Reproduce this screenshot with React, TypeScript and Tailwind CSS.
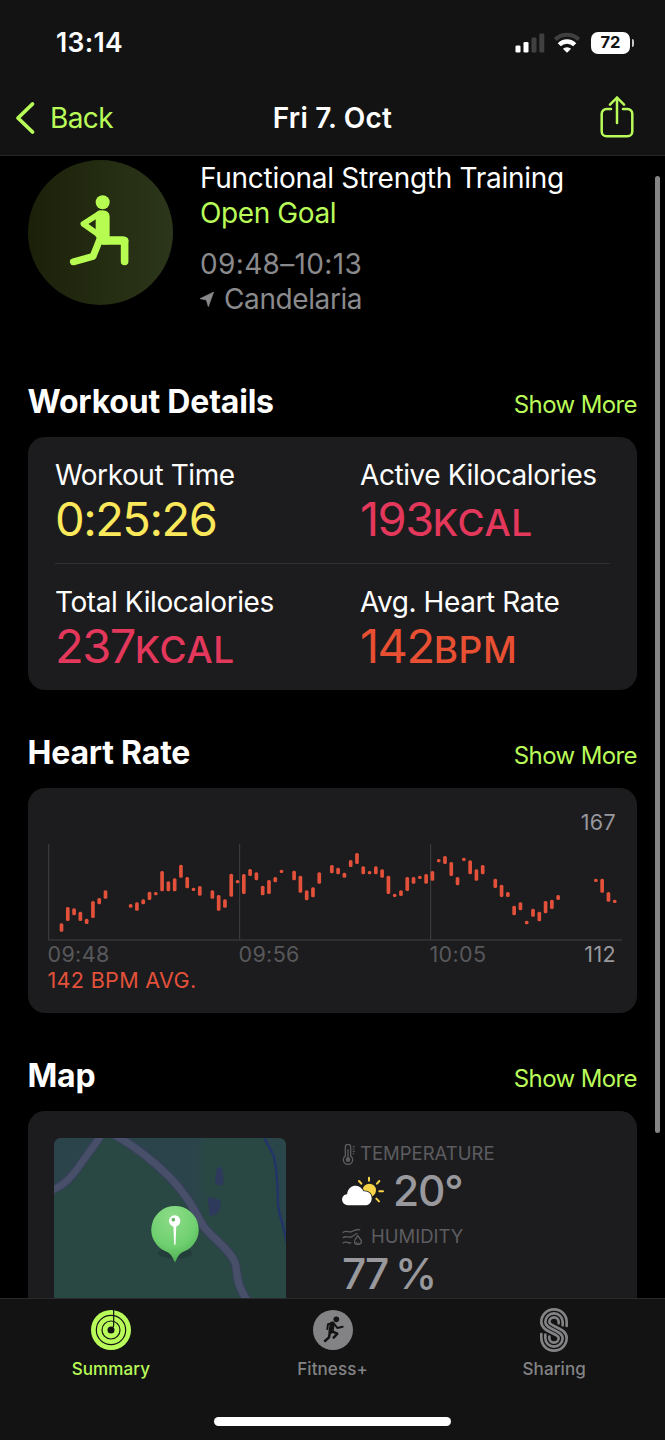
import type { ReactNode } from "react";

// [slot, top, bottom] of every heart rate sample
const samples: [number, number, number][] = [
  [0, 280, 305], [1, 231, 273], [2, 235, 256], [3, 245, 273], [4, 266, 282],
  [5, 213, 264], [6, 204, 223], [7, 181, 206], [11, 222, 233], [12, 217, 242],
  [13, 208, 223], [14, 185, 210], [15, 186, 196], [16, 123, 184], [17, 154, 184],
  [18, 145, 184], [19, 104, 143], [20, 141, 175], [21, 173, 183], [22, 168, 197],
  [24, 181, 206], [25, 195, 242], [26, 208, 233], [27, 131, 200], [28, 150, 160],
  [29, 132, 192], [30, 117, 138], [31, 127, 151], [32, 167, 196], [33, 150, 192],
  [34, 141, 157], [35, 119, 129], [37, 122, 151], [38, 137, 188], [39, 181, 211],
  [40, 172, 202], [41, 127, 161], [43, 105, 130], [44, 113, 133], [45, 128, 143],
  [46, 90, 111], [47, 69, 102], [48, 109, 133], [49, 123, 133], [50, 109, 133],
  [51, 118, 143], [52, 137, 192], [53, 191, 201], [54, 181, 198], [55, 141, 183],
  [56, 141, 161], [57, 137, 147], [58, 132, 161], [59, 123, 152], [60, 87, 97],
  [61, 78, 102], [62, 96, 138], [63, 141, 166], [64, 83, 93], [65, 91, 133],
  [66, 118, 152], [67, 105, 133], [69, 146, 174], [70, 164, 201], [71, 186, 201],
  [72, 227, 256], [73, 217, 241], [74, 272, 283], [75, 236, 260], [76, 245, 274],
  [77, 213, 250], [78, 209, 237], [79, 195, 210], [85, 146, 156], [86, 146, 188],
  [87, 186, 215], [88, 209, 219],
];

const details = [
  { label: "Workout Time", value: "0:25:26", unit: "", color: "text-[#fbe95b]" },
  { label: "Active Kilocalories", value: "193", unit: "KCAL", color: "text-[#e3385c]" },
  { label: "Total Kilocalories", value: "237", unit: "KCAL", color: "text-[#e3385c]" },
  { label: "Avg. Heart Rate", value: "142", unit: "BPM", color: "text-[#e84f33]" },
];

function SectionHeader({ title }: { title: string }) {
  return (
    <div className="flex h-[40px] items-baseline justify-between leading-[40px]">
      <h2 className="text-[32px] font-bold tracking-[-0.2px] text-white">{title}</h2>
      <span className="text-[24px] tracking-[-0.6px] text-[#b9fb58]">Show More</span>
    </div>
  );
}

function StatusBar() {
  return (
    <div className="flex h-[81px] items-center pt-1 pr-[31px] pl-[56px]">
      <span className="text-[26.5px] font-semibold tracking-[0.3px] text-white">13:14</span>
      <div className="ml-auto flex items-center">
        <svg width="30" height="20" viewBox="0 0 30 20" className="mr-2">
          <rect x="0.5" y="12.5" width="5" height="7" rx="1.3" fill="#fff" />
          <rect x="8.5" y="9" width="5" height="10.5" rx="1.3" fill="#fff" />
          <rect x="16.5" y="4.5" width="5" height="15" rx="1.3" fill="#404040" />
          <rect x="24.3" y="0.5" width="5" height="19" rx="1.3" fill="#404040" />
        </svg>
        <svg width="28" height="21" viewBox="0 0 28 21" className="mr-[10px]" fill="none">
          <path d="M2.3 7.5a16.8 16.8 0 0 1 23.4 0" stroke="#404040" strokeWidth="4.2" />
          <path d="M6.3 12.8a10.8 10.8 0 0 1 15.4 0" stroke="#fff" strokeWidth="4.4" />
          <path d="M9.9 16.8a6 6 0 0 1 8.2 0L14 20.8z" fill="#fff" />
        </svg>
        <div className="flex h-[22px] w-[39px] items-center justify-center rounded-[7px] bg-white text-[16.5px] font-bold text-[#131313]">
          72
        </div>
        <div className="ml-[1.5px] h-2 w-[2.5px] rounded-r-full bg-[#c8c8c8]" />
      </div>
    </div>
  );
}

function NavBar() {
  return (
    <div className="grid h-[74px] grid-cols-[1fr_auto_1fr] items-center px-[15px]">
      <div className="flex items-center text-[#b9fb58]">
        <svg width="21" height="34" viewBox="0 0 21 34" fill="none" stroke="currentColor" strokeWidth="3.8" strokeLinecap="round" strokeLinejoin="round">
          <path d="M17.5 3 3 17l14.500 14" />
        </svg>
        <span className="ml-[14px] text-[28px] tracking-[-0.6px]">Back</span>
      </div>
      <h1 className="text-[28px] font-semibold tracking-[0.2px] text-white">Fri 7. Oct</h1>
      <svg width="34" height="42" viewBox="0 0 34 42" className="mr-4 mb-[2px] justify-self-end text-[#b9fb58]" fill="none" stroke="currentColor" strokeWidth="2.5" strokeLinecap="round" strokeLinejoin="round">
        <path d="M11 13H6.5A4.8 4.8 0 0 0 1.7 17.8v17.7a4.8 4.8 0 0 0 4.8 4.8h21a4.8 4.8 0 0 0 4.8-4.8V17.8A4.8 4.8 0 0 0 27.5 13H23" />
        <path d="M17 27V1.5M10 8.7l7-7.2 7 7.2" />
      </svg>
    </div>
  );
}

function WorkoutIcon() {
  return (
    <div className="h-[145px] w-[145px] shrink-0 rounded-full bg-gradient-to-r from-[#1b2109] to-[#2c361a]">
      <svg width="145" height="145" viewBox="80.5 29 436 436" fill="none" stroke="#b6fc51" strokeLinecap="round" strokeLinejoin="round">
        <circle cx="305" cy="156" r="21" fill="#b6fc51" stroke="none" />
        <path d="M284 190q5-10 20-10 22 0 22 20v58h37q20 0 20 17l-78 9-21-24z" fill="#b6fc51" stroke="none" />
        <path d="M295 190 247 221 293 254" strokeWidth="17" />
        <path d="M298 264 276 319 217 335" strokeWidth="21" />
        <path d="M306 272H371V334" strokeWidth="23" />
      </svg>
    </div>
  );
}

function HeartChart() {
  return (
    <svg width="574" height="97" viewBox="51 42 1722 291" className="block">
      <g stroke="#414143" strokeWidth="3">
        <path d="M53 42V329M626 42V329M1199 42V329M52 330H1773" />
      </g>
      {samples.map(([slot, top, bottom]) => (
        <rect
          key={slot}
          x={86 + slot * 18.86}
          y={top}
          width="11"
          height={bottom - top}
          rx="4.5"
          fill="#e4513a"
        />
      ))}
    </svg>
  );
}

function MapPreview() {
  return (
    <svg width="232" height="160" viewBox="74 86 696 480" className="block rounded-t-[7px]">
      <defs>
        <linearGradient id="field" x1="0" y1="0" x2="1" y2="0">
          <stop offset="0" stopColor="#2b444c" />
          <stop offset="0.85" stopColor="#2b444c" />
          <stop offset="1" stopColor="#294744" />
        </linearGradient>
        <radialGradient id="pin" cx="0.45" cy="0.2" r="0.85">
          <stop offset="0" stopColor="#8edc88" />
          <stop offset="0.6" stopColor="#6fd070" />
          <stop offset="1" stopColor="#4aa84e" />
        </radialGradient>
      </defs>
      <rect x="74" y="86" width="696" height="480" fill="#294743" />
      <path d="M74 86H210L140 180 74 238z" fill="#2b444c" />
      <path d="M265 86H532V240L515 335 440 230z" fill="url(#field)" />
      <path d="M704 86 735 145 745 290 770 385V86z" fill="#2b464a" />
      <g fill="none">
        <path d="M64 244C100 232 130 200 150 170S195 110 215 78" stroke="#39405c" strokeWidth="26" />
        <path d="M64 244C100 232 130 200 150 170S195 110 215 78" stroke="#485069" strokeWidth="20" />
        <path d="M255 76C310 108 370 150 425 208S495 305 525 355C560 395 600 420 615 455S610 505 655 576" stroke="#39405c" strokeWidth="27" />
        <path d="M255 76C310 108 370 150 425 208S495 305 525 355C560 395 600 420 615 455S610 505 655 576" stroke="#485069" strokeWidth="21" />
        <path d="M704 82C712 105 730 125 735 148 742 180 745 220 746 285 748 320 765 350 772 400" stroke="#22346a" strokeWidth="7" />
      </g>
      <path d="M563 176 574 172 580 183 583 220 575 230 560 225 557 210zM534 262 560 268 575 272 572 300 560 316 540 320 538 290z" fill="#2e3a5c" />
      <ellipse cx="438" cy="432" rx="52" ry="16" fill="#1d3532" opacity="0.5" />
      <path d="M437 290a71 71 0 0 1 25 137.5c-13 6-17 16-25 32-8-16-12-26-25-32A71 71 0 0 1 437 290z" fill="url(#pin)" />
      <path d="M432 346h9l-2.5 60h-4z" fill="#fff" />
      <circle cx="436" cy="335" r="17" fill="#fff" />
      <circle cx="432" cy="331" r="5.5" fill="#6ab56b" />
    </svg>
  );
}

function WeatherIcon() {
  return (
    <svg width="42" height="30" viewBox="66 198 126 90">
      <circle cx="148" cy="241" r="20" fill="#f8d548" />
      <path d="M147 203v9M117 213l7 8M178 213l-7 8M178 244h11M169 266l8 8" stroke="#f8d548" strokeWidth="6" strokeLinecap="round" />
      <path
        d="M84 286C60 284 62 254 81 253 84 232 98 226 108 227 119 228 126 235 131 244 147 243 156 253 155 267 154 279 145 286 135 286z"
        fill="#fff"
        stroke="#1c1c1e"
        strokeWidth="5"
        paintOrder="stroke"
      />
    </svg>
  );
}

function ThermometerIcon() {
  return (
    <svg width="14" height="21" viewBox="66 100 42 63" fill="none" stroke="#5c5c60" strokeWidth="4" strokeLinecap="round">
      <path d="M76 136V109a8 8 0 0 1 16 0v27a14 14 0 1 1-16 0z" />
      <path d="M84 117v25" />
      <circle cx="84" cy="147" r="5" fill="#5c5c60" />
      <path d="M99 108h5M99 115h3M99 122h5M99 129h3" strokeWidth="3" />
    </svg>
  );
}

function HumidityIcon() {
  return (
    <svg width="21" height="18" viewBox="68 353 64 54" fill="none" stroke="#5c5c60" strokeWidth="4" strokeLinecap="round" strokeLinejoin="round">
      <path d="M71 366c10-8 18 2 28-3s16-8 23-5M71 382c10-8 17 3 27-3s9-8 16-9M71 398c9-7 14 2 24 0" />
      <path d="M116 376c6 9 13 15 11 20-3 9-19 9-21 0-1-6 5-11 10-20z" />
      <path d="M112 397q3 4 7 2" strokeWidth="3" />
    </svg>
  );
}

function RingsIcon() {
  return (
    <svg width="40" height="40" viewBox="152 46 120 120">
      <circle cx="212" cy="106" r="60" fill="#b9fb58" />
      <g fill="none" stroke="#131313" strokeWidth="3.6">
        <circle cx="212" cy="106" r="44" />
        <circle cx="212" cy="106" r="27" />
        <path d="M220 44V92q0 6-6 10" />
      </g>
      <circle cx="212" cy="106" r="10.5" fill="#131313" />
    </svg>
  );
}

function RunnerIcon() {
  return (
    <svg width="40" height="40" viewBox="816 46 120 120" fill="none" stroke="#131313" strokeLinecap="round" strokeLinejoin="round">
      <circle cx="876" cy="106" r="60" fill="#838385" stroke="none" />
      <circle cx="886" cy="74" r="8.5" fill="#131313" stroke="none" />
      <path d="M874 88 870 110" strokeWidth="15" />
      <path d="M874 86 861 89 859 103M880 88 889 100 905 96" strokeWidth="6" />
      <path d="M873 110 889 117 878 129M867 112 864 128 852 139" strokeWidth="7.5" />
    </svg>
  );
}

function SharingIcon() {
  return (
    <svg width="28" height="44" viewBox="180 40 84 132" fill="none" stroke="#838385" strokeWidth="8" strokeLinecap="round">
      <path d="M260 94V82A38 38 0 0 0 184 82C184 113 236 116 236 130A14 14 0 0 1 208 130V126" />
      <path d="M248 92V82A26 26 0 0 0 196 82C196 106 248 106 248 130A26 26 0 0 1 196 130V120" />
      <path d="M236 86V82A14 14 0 0 0 208 82C208 96 260 99 260 130A38 38 0 0 1 184 130V118" />
    </svg>
  );
}

function Tab({ icon, label, className }: { icon: ReactNode; label: string; className: string }) {
  return (
    <div className="flex flex-1 flex-col items-center">
      <div className="flex h-[44px] items-center">{icon}</div>
      <span className={`mt-[5px] text-[17px] leading-[24px] font-medium tracking-[0.1px] ${className}`}>{label}</span>
    </div>
  );
}

export default function App() {
  return (
    <div className="relative flex h-[1440px] w-[665px] flex-col overflow-hidden bg-black font-['Inter',sans-serif]">
      <header className="h-[156px] shrink-0 border-b border-[#262627] bg-[#131313]">
        <StatusBar />
        <NavBar />
      </header>

      <main className="min-h-0 flex-1 overflow-hidden pt-[4px] pr-[28px] pl-[27.5px]">
        {/* Summary */}
        <div className="flex h-[222px]">
          <WorkoutIcon />
          <div className="ml-[27.5px] pt-px text-[28px] leading-[35px] whitespace-nowrap">
            <p className="tracking-[-0.28px] text-white">Functional Strength Training</p>
            <p className="tracking-[-0.4px] text-[#b9fb58]">Open Goal</p>
            <p className="mt-4 tracking-[0.35px] text-[#8a8a8d]">09:48–10:13</p>
            <p className="flex items-center tracking-[-0.4px] text-[#8a8a8d]">
              <svg width="14" height="15" viewBox="602 428 42 45" className="mr-[10px]" fill="currentColor">
                <path d="M643 428 602 448 621 452 627 472z" stroke="currentColor" strokeWidth="2" />
              </svg>
              Candelaria
            </p>
          </div>
        </div>

        {/* Workout details */}
        <SectionHeader title="Workout Details" />
        <div className="mt-[15px] h-[253px] rounded-[17px] bg-[#1c1c1e] px-[27.5px] pt-[20px]">
          <div className="grid grid-cols-[305px_1fr]">
            {details.map((item, i) => (
              <div
                key={item.label}
                className={`whitespace-nowrap ${i < 2 ? "h-[107px] border-b border-[#303033]" : "pt-[20px]"}`}
              >
                <p className="text-[28px] leading-[36px] tracking-[-0.42px] text-white">{item.label}</p>
                <p className={`text-[47px] leading-[52px] tracking-[-1.5px] ${item.color}`}>
                  {item.value}
                  <span className="text-[37px] font-medium tracking-[0.6px]">{item.unit}</span>
                </p>
              </div>
            ))}
          </div>
        </div>

        {/* Heart rate */}
        <div className="h-[43px]" />
        <SectionHeader title="Heart Rate" />
        <div className="mt-[15px] h-[225px] rounded-[17px] bg-[#1c1c1e] pr-[16px] pl-[20px] text-[21.5px] tracking-[0.35px]">
          <div className="pt-[21px] pr-[5px] text-right leading-[27px] text-[#98989d]">167</div>
          <div className="h-[8px]" />
          <HeartChart />
          <div className="grid grid-cols-[191px_191px_1fr] leading-[26px] text-[#58585b]">
            <span>09:48</span>
            <span>09:56</span>
            <span className="flex justify-between pr-[5px]">
              10:05<span className="text-[#98989d]">112</span>
            </span>
          </div>
          <div className="leading-[27px] text-[#e4513a]">142 BPM AVG.</div>
        </div>

        {/* Map */}
        <div className="h-[43px]" />
        <SectionHeader title="Map" />
        <div className="mt-[15px] flex h-[260px] rounded-[17px] bg-[#1c1c1e] pt-[27px] pl-[26.5px]">
          <MapPreview />
          <div className="ml-[56px] pt-[2px] text-[#98989d]">
            <div className="flex h-[28px] items-center gap-[4px] text-[18.5px] text-[#5c5c60]">
              <ThermometerIcon />
              TEMPERATURE
            </div>
            <div className="flex h-[46px] items-center gap-[9px] text-[42.5px] leading-[46px] font-medium tracking-[-1.2px]">
              <WeatherIcon />
              20°
            </div>
            <div className="mt-[9px] flex h-[28px] items-center gap-[8px] text-[18.5px] text-[#5c5c60]">
              <HumidityIcon />
              HUMIDITY
            </div>
            <div className="text-[42.5px] leading-[45px] font-medium tracking-[-2.2px] [word-spacing:-1px]">77 %</div>
          </div>
        </div>
      </main>

      {/* Scroll indicator */}
      <div className="absolute top-[176px] right-[5px] h-[957px] w-[5px] rounded-full bg-[#858585]" />

      <nav className="flex h-[142px] shrink-0 flex-col border-t border-[#2a2a2c] bg-[#131313] pt-[9px]">
        <div className="flex">
          <Tab icon={<RingsIcon />} label="Summary" className="text-[#b9fb58]" />
          <Tab icon={<RunnerIcon />} label="Fitness+" className="text-[#838385]" />
          <Tab icon={<SharingIcon />} label="Sharing" className="text-[#838385]" />
        </div>
        <div className="mx-auto mt-[36px] h-[8.5px] w-[237px] rounded-full bg-white" />
      </nav>
    </div>
  );
}
